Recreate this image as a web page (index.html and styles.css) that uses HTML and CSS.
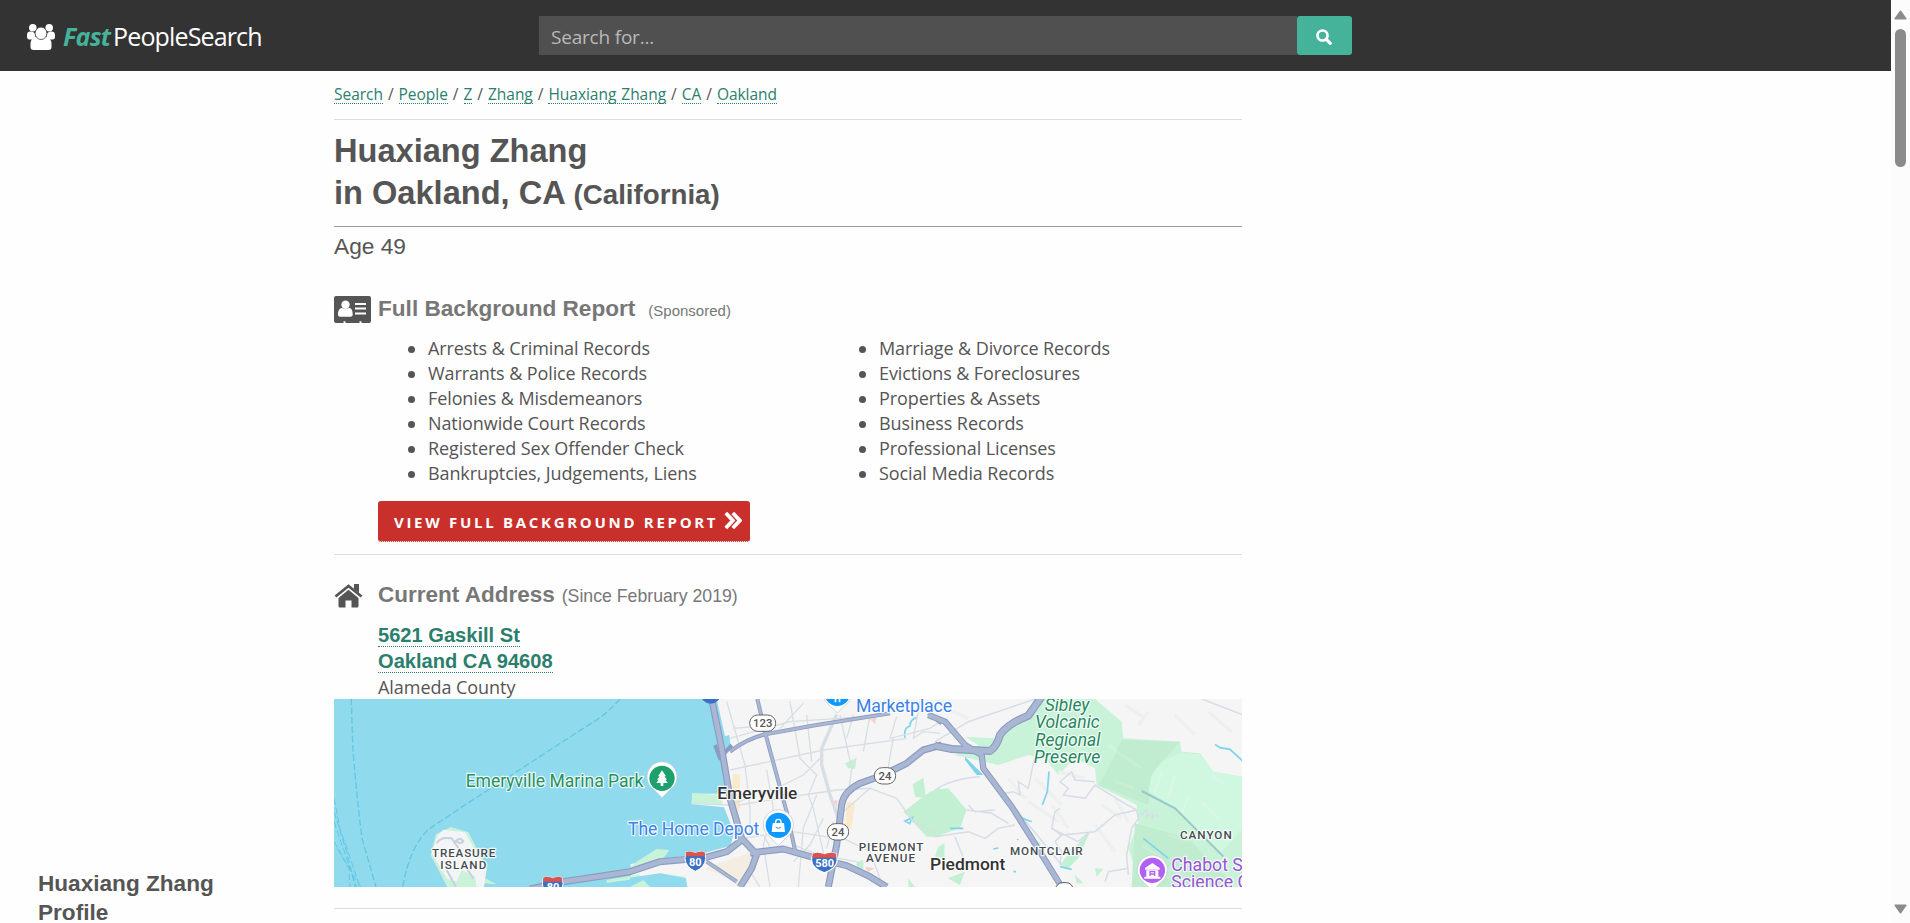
FILE: index.html
```html
<!DOCTYPE html>
<html lang="en">
<head>
<meta charset="utf-8">
<title>Huaxiang Zhang in Oakland, CA | FastPeopleSearch</title>
<link rel="stylesheet" href="styles.css">
</head>
<body>
<div class="page">
  <header class="topbar">
    <div class="logo">
      <svg class="logo-icon" viewBox="0 0 28 26"><g fill="#fff"><circle cx="5.8" cy="3.8" r="3.8"/><circle cx="22.2" cy="3.8" r="3.8"/><path d="M0 13V11c0-3 2-4 4.500-3.500 2 .7 3.500 1 3.500 3 0 2 .5 3 1.500 3.500-1.500.300-3 1-4 1.500H2.500C.8 15.500 0 14.500 0 13zM28 13V11c0-3-2-4-4.500-3.500-2 .7-3.500 1-3.500 3 0 2-.5 3-1.500 3.500 1.500.300 3 1 4 1.500h3c1.700 0 2.500-1 2.500-2.500z"/></g><path d="M3.500 23v-3c0-4 2-6.500 5-7h11c3 .5 5 3 5 7v3c0 2-1 3-3 3h-15c-2 0-3-1-3-3z" fill="#fff"/><ellipse cx="14" cy="9.300" rx="5.900" ry="6.200" fill="#fff" stroke="#444" stroke-width=".8"/></svg>
      <span class="logo-fast">Fast</span><span class="logo-rest">PeopleSearch</span>
    </div>
    <div class="search">
      <div class="search-input">Search for...</div>
      <div class="search-btn"><svg viewBox="0 0 16 16"><circle cx="6.500" cy="6.500" r="5" fill="none" stroke="#fff" stroke-width="2.700"/><path d="M10.300 10.300l4 4" stroke="#fff" stroke-width="3.200" stroke-linecap="round"/></svg></div>
    </div>
  </header>
  <div class="layout">
    <aside class="side"><h2>Huaxiang Zhang<br>Profile</h2></aside>
    <main class="content">
      <nav class="crumbs"><a>Search</a> / <a>People</a> / <a>Z</a> / <a>Zhang</a> / <a>Huaxiang Zhang</a> / <a>CA</a> / <a>Oakland</a></nav>
      <h1>Huaxiang Zhang<br>in Oakland, CA <small>(California)</small></h1>
      <div class="age">Age 49</div>
      <section class="report">
        <div class="head"><svg class="card-icon" viewBox="0 0 37 27"><path d="M2 0h33q2 0 2 2v23q0 2-2 2h-7.500v-1.800h-2V27h-14v-1.800h-2V27H2q-2 0-2-2V2q0-2 2-2z" fill="#555"/><circle cx="11.500" cy="8.700" r="4.200" fill="#fff"/><path d="M4 18.500c0-4 1.500-6.500 4-6.500 2 1.500 5 1.500 7 0 2.500 0 3.700 2.500 3.700 6.500 0 1.300-.7 2.200-2 2.200H6c-1.300 0-2-.9-2-2.200z" fill="#fff"/><path d="M21 8h11M21 12.500h11M21 17.500h11" stroke="#fff" stroke-width="2"/></svg>
        <h2>Full Background Report</h2><span class="sponsored">(Sponsored)</span></div>
        <div class="lists">
          <ul><li>Arrests &amp; Criminal Records</li><li>Warrants &amp; Police Records</li><li>Felonies &amp; Misdemeanors</li><li>Nationwide Court Records</li><li>Registered Sex Offender Check</li><li>Bankruptcies, Judgements, Liens</li></ul>
          <ul><li>Marriage &amp; Divorce Records</li><li>Evictions &amp; Foreclosures</li><li>Properties &amp; Assets</li><li>Business Records</li><li>Professional Licenses</li><li>Social Media Records</li></ul>
        </div>
        <a class="cta"><span>VIEW FULL BACKGROUND REPORT</span><svg viewBox="0 0 18 19"><path d="M1.800 2l7 7.500-7 7.500M8.800 2l7 7.500-7 7.500" fill="none" stroke="#fff" stroke-width="3.800"/></svg></a>
      </section>
      <section class="address">
        <div class="head"><svg class="home-icon" viewBox="0 0 29 24"><path d="M1.500 12.500L14.500 2l13 10.500" fill="none" stroke="#555" stroke-width="2.800"/><path d="M20 0h5v9l-5-4zM4.500 14l10-8.200L24.500 14v8q0 1.500-1.500 1.500h-5.500v-7h-6v7H6q-1.500 0-1.500-1.500z" fill="#555"/></svg>
        <h2>Current Address</h2><span class="since">(Since February 2019)</span></div>
        <div class="lines"><div><a>5621 Gaskill St</a></div><div><a>Oakland CA 94608</a></div></div>
        <div class="county">Alameda County</div>
        <svg class="map" viewBox="0 0 2724 564">
          <rect width="2724" height="564" fill="#f5f5f5"/>
          <path d="M0 0H1148L1175 120 1185 145 1165 165 1190 250 1168 284 1080 284 1072 315 1170 325 1200 400 1190 440 1100 465 980 480 890 495 890 564H0z" fill="#90daee"/>
          <!-- open water -->
          <g transform="translate(-12 -12)" fill="none" stroke="#62c7e3" stroke-width="4" stroke-dasharray="20 8">
            <path d="M64 10L68 150Q78 290 96 430L138 576M870 12Q830 60 760 100L560 230 420 320 300 400Q240 450 218 576"/>
            <path d="M12 310L30 400 90 576M12 380L80 576M12 440L70 540 92 576M22 460L56 520 60 576M12 350L50 470 75 576" stroke-width="3"/>
          </g>
          <g transform="translate(-12 -12)">
            <path d="M362 396L415 412 440 460 470 510 465 550 500 568 455 564 462 576H352L302 480 318 418z" fill="#c9f3d8"/>
            <path d="M340 404L405 412 435 465 470 520 462 576 440 576 435 545 395 525 380 560 350 550 305 475 322 422z" fill="#f3f4f5"/>
            <path d="M320 445Q330 425 365 430L400 480M350 525L378 576M375 440Q390 425 400 438 395 450 378 438M410 520L430 550" fill="none" stroke="#c9cfdd" stroke-width="6"/>
            <path d="M830 555L930 538 930 550 830 564z" fill="#c9f3d8"/>
          </g>
          <!-- Emeryville and Oakland -->
          <g transform="translate(888 -12)">
            <path d="M0 550L90 535 165 545 170 576H0z" fill="#c9f3d8"/>
            <path d="M0 548L90 535 168 550 172 576H60L40 555 0 576z" fill="#90daee"/>
            <path d="M225 520L365 470 360 560 330 576 290 550z" fill="#f3ede2"/>
            <path d="M265 130L298 120 302 155 275 165z" fill="#90daee"/>
            <path d="M20 500L80 462 118 465 100 490 0 520z" fill="#c9f3d8"/>
            <path d="M186 294L272 300 278 328 185 325z" fill="#c9f3d8"/>
            <path d="M310 235L330 240 330 350 300 310zM650 320L675 325 665 400 645 400z" fill="#fae9cd"/>
            <path d="M645 205L680 188 675 222 655 220zM848 268L880 248 888 310 855 305zM820 350L900 290 930 278 930 425 890 425zM680 500L700 495 700 522 680 522zM835 550L855 576 835 576z" fill="#c3f0d3"/>
            <path d="M825 378l22-10-8 18zM860 68q-20 5-20 25-20 5-15 35" fill="none" stroke="#7dd4ea" stroke-width="5"/>
            <path d="M720 72l20-5-5 20zM705 515l28 5-20 12zM610 318l12-4 0 24z" fill="#f9d2c8"/>
            <g fill="none" stroke="#d8dee5" stroke-width="4">
              <path d="M300 130L480 80 780 60M300 225L580 165 830 130M325 330L520 300 620 285 720 280 640 350M185 325L300 330 350 310"/>
              <path d="M290 20L345 210 360 340 360 420M480 20L510 190 560 240 535 300 550 340 600 560M630 60L665 220 655 300M670 60L650 130M720 60L700 170M530 60L545 200M400 300L520 240 580 180M720 280L800 310 850 380 930 420M560 300L520 400 505 576M790 130L770 240M410 225L430 340 400 450 420 576M310 100L440 90M520 25L450 100M370 460L360 530 390 576M490 410L620 430M490 450L570 480 680 500M640 430L720 470 760 576M800 65L780 130 900 100 930 80M490 500L540 450 580 370M610 380L590 460"/>
              <path d="M620 58L575 160 575 210 600 300 625 370" stroke-width="10"/>
              <path d="M340 430L400 420 420 455M870 20L850 130 880 110 930 115"/>
            </g>
            <g fill="none" stroke-linejoin="round">
              <g stroke="#8b9cc2"><path d="M245 12L275 160 300 310 335 430 380 478 365 520 330 576M-300 582L-200 560 -90 544 0 530 90 500 225 488 290 470 335 435M360 474L460 462 560 490 650 512 720 545 770 576M595 576L620 450 635 330Q640 290 690 265L760 240 830 205 880 165 935 150" stroke-width="21"/><path d="M382 12L410 130 470 350 495 465M300 170Q350 130 410 117L560 90 780 55M255 150L270 190 305 150 M230 500L320 560M895 55L935 85" stroke-width="12"/></g>
              <g stroke="#a9b7d3"><path d="M245 12L275 160 300 310 335 430 380 478 365 520 330 576M-300 582L-200 560 -90 544 0 530 90 500 225 488 290 470 335 435M360 474L460 462 560 490 650 512 720 545 770 576M595 576L620 450 635 330Q640 290 690 265L760 240 830 205 880 165 935 150" stroke-width="14"/><path d="M382 12L410 130 470 350 495 465M300 170Q350 130 410 117L560 90 780 55M230 500L320 560M895 55L935 85" stroke-width="7"/></g>
            </g>
          </g>
          <!-- Oakland hills -->
          <g transform="translate(1803 -12)">
            <path d="M320 12H480L560 80 565 130 735 140 740 170 795 175 835 230 925 245V576H590L600 520 580 460 610 385 605 330 485 270 480 220 420 190 370 240 330 190 280 180 190 210 60 180 130 150 90 125 180 130z" fill="#c9f3d8"/>
            <path d="M560 135L735 140 680 200 650 240 640 330 490 270 520 220zM600 385L760 430 900 576H590z" fill="#c0ecd0"/>
            <path d="M735 175L795 178 835 230 925 245V400L860 470 790 410 720 340 640 290 650 240 680 200z" fill="#d0f7e0"/>
            <path d="M0 285L40 280 95 345 75 400 0 425zM10 455L28 445V490L0 485zM38 550L90 530 75 570zM295 430L318 445 305 458zM410 465L465 410 430 490 400 520 375 510zM480 520L505 522 485 545zM420 540L445 565 425 565z" fill="#c3f0d3"/>
            <path d="M90 185L145 240 125 240 90 195z" fill="#7dd4ea"/>
            <g stroke="#fff" opacity=".14" stroke-width="9" fill="none"><path d="M520 150l40 30M540 260l60 20M680 230l-20 60M720 240l-20 70M760 300l-20 60M700 420l60 18M620 450l60 38M830 240l40 30M660 510l90 28M560 180l60 40M420 160l50 22M800 320l50 50"/></g>
            <g fill="none" stroke="#eeefef" stroke-width="10"><path d="M300 250l80 80M280 320l90 60M350 330l50 70M540 310l40 70M500 330l60 40M370 230l80 20M640 50l-30 40M720 60l60 60M820 50l70 60M220 250l50 60M480 390l60 80M570 30l60 40M10 30l90 40"/></g>
            <g fill="none" stroke="#d7dde6" stroke-width="4.500">
              <path d="M0 285Q50 250 135 245M95 345L170 355 220 385M0 425L100 410 150 430 190 400 240 390M60 425L90 500M300 180L280 280 250 260 255 300 235 290 210 295M480 260L420 255 410 230 375 260 400 280 385 300 450 310 480 270 560 320 605 345 610 370 590 400 575 480 580 540M605 345L540 360 480 410 380 420 350 400 360 350 375 340M380 420L360 440 380 470 375 510M800 12L925 60M0 140L100 80 300 12M240 340L380 510M100 330L120 350 180 345M350 400L430 440 465 410M510 560L520 530 580 520"/>
              <path d="M620 360q20-30 15 5 25-20 15 5 20-20 20 0"/>
            </g>
            <path d="M620 288L720 340 790 410 865 485" stroke="#9ac7c9" stroke-width="6" fill="none"/>
            <path d="M840 148l15 10 30 5 38 35M625 430l75 60M342 230l-5 60-15 40M190 280l50 60M250 365l40 15M375 515l35 8M45 400h40M175 462l15-3M248 432v4M235 530h8" stroke="#7dd4ea" stroke-width="5" fill="none"/>
            <g fill="none" stroke-linejoin="round"><path d="M0 152L50 162 165 168Q185 155 195 120 220 85 280 62L320 5" stroke="#8b9cc2" stroke-width="24"/><path d="M-20 60L30 80 90 150 140 180 145 220 230 335 290 430 380 576" stroke="#8b9cc2" stroke-width="19"/><path d="M0 152L50 162 165 168Q185 155 195 120 220 85 280 62L320 5" stroke="#a9b7d3" stroke-width="17"/><path d="M-20 60L30 80 90 150 140 180 145 220 230 335 290 430 380 576" stroke="#a9b7d3" stroke-width="13"/></g>
          </g>
          <defs>
            <g id="pin"><path d="M0 60L-26 34A45 45 0 1 1 26 34z" fill="#fff" stroke="#bbc3c9" stroke-width="2"/></g>
            <g id="shield"><path d="M-28-24Q-14-30 0-22 14-30 28-24L31-6Q30 20 0 33-30 20-31-6z" fill="#3b70c4" stroke="#fff" stroke-width="3"/><path d="M-28-24Q-14-30 0-22 14-30 28-24L29-12H-29z" fill="#d9534f"/></g>
          </defs>
          <g transform="translate(888 -12)">
            <circle cx="242" cy="-4" r="30" fill="#3b70c4"/>
            <g class="route"><rect x="359" y="60" width="78" height="49" rx="24"/><rect x="733" y="218" width="64" height="49" rx="24"/><rect x="592" y="386" width="64" height="49" rx="24"/><text x="398" y="97">123</text><text x="765" y="255">24</text><text x="624" y="423">24</text></g>
            <use href="#pin" x="96" y="248"/><circle cx="96" cy="250" r="38" fill="#1da06c"/><path d="M96 226l-12 18h5l-8 10h5l-7 10h13v9h8v-9h13l-7-10h5l-8-10h5z" fill="#fff"/>
            <use href="#pin" x="445" y="392"/><circle cx="445" cy="391" r="38" fill="#0d99ff"/><path d="M428 384h34l3 27h-40z" fill="#fff"/><path d="M437 386v-5a8 8 0 0 1 16 0v5" fill="none" stroke="#fff" stroke-width="4"/><path d="M437 396q8 9 16 0" fill="none" stroke="#0d99ff" stroke-width="3"/>
            <use href="#pin" x="622" y="-6"/><circle cx="622" cy="-5" r="38" fill="#0d99ff"/><path d="M614 10h5v12h-5zM626 10h5v12h-5z" fill="#fff"/>
            <use href="#shield" x="196" y="496"/><use href="#shield" transform="translate(583 500) scale(1.250 1)"/>
            <g class="shield-num"><text x="196" y="514" textLength="38">80</text><text x="584" y="517" textLength="56">580</text></g>
            <g class="poi blue"><text x="-6" y="420" textLength="394" lengthAdjust="spacingAndGlyphs">The Home Depot</text><text x="678" y="50" textLength="288">Marketplace</text></g>
            <text class="city" x="262" y="312" textLength="240" lengthAdjust="spacingAndGlyphs">Emeryville</text><text class="city" x="900" y="524" textLength="226" lengthAdjust="spacingAndGlyphs">Piedmont</text>
            <g class="area"><text x="686" y="468" textLength="194">PIEDMONT</text><text x="708" y="502" textLength="147">AVENUE</text></g>
          </g>
          <g transform="translate(-12 -12)">
            <text class="poi green" x="407" y="276" textLength="533" lengthAdjust="spacingAndGlyphs">Emeryville Marina Park</text>
            <g class="area"><text x="306" y="487" textLength="190">TREASURE</text><text x="331" y="522" textLength="138">ISLAND</text></g>
            <use href="#shield" x="668" y="572"/><g class="shield-num"><text x="669" y="588" textLength="38">80</text></g>
          </g>
          <g transform="translate(1803 -12)">
            <g class="poi park"><text x="329" y="49" textLength="134" lengthAdjust="spacingAndGlyphs">Sibley</text><text x="300" y="100" textLength="194" lengthAdjust="spacingAndGlyphs">Volcanic</text><text x="300" y="152" textLength="196" lengthAdjust="spacingAndGlyphs">Regional</text><text x="296" y="205" textLength="200" lengthAdjust="spacingAndGlyphs">Preserve</text></g>
            <g class="area"><text x="225" y="480" textLength="218">MONTCLAIR</text><text x="735" y="431" textLength="155">CANYON</text></g>
            <use href="#pin" x="652" y="528"/><circle cx="652" cy="526" r="38" fill="#b160f5"/><path d="M630 519l22-15 22 15v5h-44zM634 526h36v20h-36zM628 545h48v6h-48z" fill="#fff"/><path d="M645 543v-13h14v13M645 537h14" fill="none" stroke="#b160f5" stroke-width="4"/>
            <g class="poi purple"><text x="709" y="528">Chabot Space &amp;</text><text x="709" y="580">Science Center</text></g>
            <rect x="362" y="563" width="52" height="40" rx="20" fill="#fff" stroke="#555" stroke-width="3"/>
          </g>
        </svg>
      </section>
    </main>
  </div>
</div>
<div class="scrollbar"><svg class="arrow" viewBox="0 0 13 10"><path d="M6.500 1.200L11.800 8.800H1.200z"/></svg><div class="thumb"></div><svg class="arrow down" viewBox="0 0 13 10"><path d="M6.500 8.800L1.200 1.200H11.800z"/></svg></div>
</body>
</html>
```
FILE: styles.css
```css
* { box-sizing: border-box; }
body { margin: 0; height: 923px; overflow: hidden; display: flex; background: #fefefe; color: #555; font-family: "Open Sans", "Noto Sans", sans-serif; }
h1, h2, ul { margin: 0; padding: 0; }
h1, h2, .age, .sponsored, .since, .lines { font-family: "Liberation Sans", Arial, sans-serif; }
.page { width: 1891px; height: 923px; overflow: hidden; }
.topbar { height: 71px; background: #333; display: flex; padding-left: 27px; }
.logo { width: 512px; display: flex; align-items: center; color: #fff; line-height: 34px; white-space: nowrap; }
.logo-icon { width: 28px; height: 26px; margin: 3px 8px 0 0; }
.logo-fast { color: #45b29a; font-weight: 700; font-style: italic; font-size: 25px; letter-spacing: -.7px; width: 50px; padding-top: 1px; }
.logo-rest { font-size: 25px; letter-spacing: -.85px; padding-top: 1px; }
.search { display: flex; height: 39px; margin-top: 16px; }
.search-input { width: 758px; background: #505050; color: #b9b9b9; font-size: 19px; line-height: 42px; padding-left: 12px; letter-spacing: -.2px; }
.search-btn { width: 55px; background: #45b29a; border-radius: 3px; display: flex; align-items: center; justify-content: center; }
.search-btn svg { width: 16px; height: 16px; margin-left: -2px; margin-top: 2px; }
.layout { display: flex; }
.side { width: 334px; padding: 798px 0 0 38px; }
.side h2 { font-size: 22.600px; line-height: 29px; }
.content { width: 908px; }
.crumbs { height: 49px; border-bottom: 1px solid #ddd; font-size: 15.500px; line-height: 20px; padding-top: 13px; letter-spacing: -.03px; word-spacing: 1px; }
.crumbs a { display: inline-block; line-height: 18px; color: #2b7f6c; border-bottom: 1px dotted #2b7f6c; }
h1 { height: 107px; padding-top: 10px; font-size: 32.600px; line-height: 42px; border-bottom: 1px solid #999; }
h1 small { font-size: 27.700px; }
.age { height: 69px; padding-top: 5px; font-size: 22.700px; line-height: 28px; }
.head { display: flex; align-items: baseline; color: #777; }
.head h2 { font-size: 22.500px; line-height: 30px; }
.head svg { align-self: flex-start; }
.report { height: 259px; border-bottom: 1px solid #ddd; padding-left: 44px; }
.report .head { margin-left: -44px; height: 40px; }
.report .head h2 { font-size: 22.600px; line-height: 25px; }
.card-icon { width: 37px; height: 27px; margin: 0 7px 0 0; }
.sponsored { font-size: 15px; line-height: 20px; margin-left: 13px; }
.lists { display: grid; grid-template-columns: 451px 1fr; font-size: 18px; line-height: 25px; letter-spacing: -.1px; }
.lists ul { padding-left: 50px; list-style: none; }
.lists li::before { content: ""; display: inline-block; width: 7px; height: 7px; border-radius: 50%; background: #555; margin: 0 13px 0 -20px; vertical-align: 2.500px; }
.cta { display: flex; width: 372px; height: 41px; margin-top: 15px; padding-left: 16px; background: #c9302c; border-bottom: 1px dotted #fff; border-radius: 3px; color: #fff; font-weight: 700; font-size: 15px; line-height: 43px; letter-spacing: 2.700px; white-space: nowrap; }
.cta span { width: 330px; }
.cta svg { width: 18px; height: 19px; margin-top: 10px; }
.address { height: 354px; border-bottom: 1px solid #ddd; padding-top: 25px; }
.address .head { height: 42px; }
.home-icon { width: 29px; height: 24px; margin: 4px 15px 0 0; }
.since { font-size: 17.700px; margin-left: 7px; }
.lines { padding-left: 44px; font-weight: 700; font-size: 20.100px; line-height: 26px; color: #2b7f6c; }
.lines a { border-bottom: 1px dotted #2b7f6c; }
.county { padding-left: 44px; height: 25px; line-height: 26px; font-size: 18px; letter-spacing: -.05px; }
.map { display: block; width: 908px; height: 188px; font-family: Roboto, sans-serif; }
.map text { paint-order: stroke; stroke: #fff; stroke-opacity: .85; stroke-width: 7px; stroke-linejoin: round; }
.route rect { fill: #fff; stroke: #666; stroke-width: 3px; }
.route text { font-size: 34px; font-weight: 500; fill: #555; text-anchor: middle; }
.map .shield-num text { font-size: 33px; font-weight: 700; fill: #fff; stroke: none; text-anchor: middle; }
.poi { font-size: 53px; }
.blue { fill: #3b82e8; }
.green { fill: #25915f; }
.park { fill: #25875f; font-style: italic; }
.purple { fill: #9654d6; }
.city { font-size: 52px; font-weight: 500; fill: #333; }
.area { font-size: 35px; font-weight: 500; fill: #444b50; }
.scrollbar { width: 19px; height: 923px; background: #fcfcfc; display: flex; flex-direction: column; align-items: center; padding-top: 10px; }
.arrow { width: 13px; height: 10px; fill: #8b8b8b; stroke: #8b8b8b; stroke-width: 1.500px; stroke-linejoin: round; }
.thumb { width: 11px; height: 138px; margin-top: 9px; border-radius: 6px; background: #8b8b8b; }
.down { margin-top: auto; margin-bottom: 9px; }
```
